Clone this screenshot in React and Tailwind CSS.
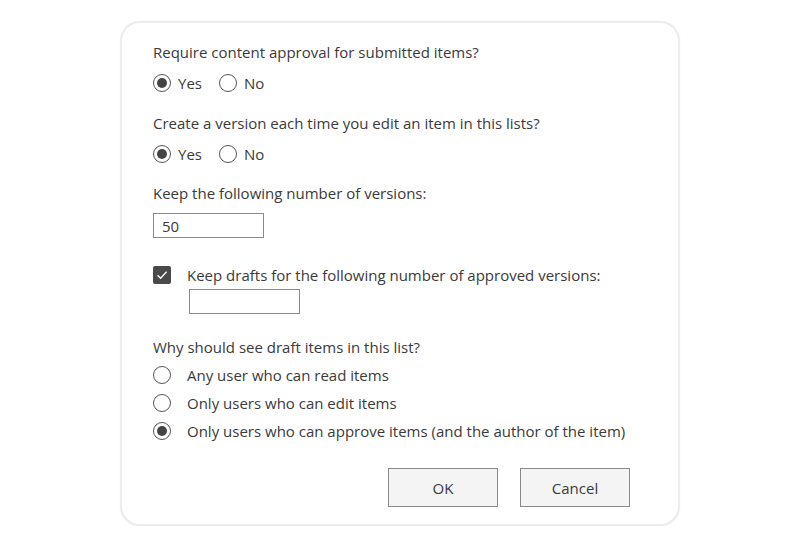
import React, { useState } from 'react';

const Radio = ({ checked, onChange, label }) => (
    <label className="flex items-center h-5 cursor-pointer" onClick={onChange}>
        <span className="w-[18px] h-[18px] rounded-full border-[1.5px] border-[#555] flex items-center justify-center bg-white">
            {checked && <span className="w-[10px] h-[10px] rounded-full bg-[#444]" />}
        </span>
        <span className="ml-[7px]">{label}</span>
    </label>
);

const App = () => {
    const [approval, setApproval] = useState('yes');
    const [versioning, setVersioning] = useState('yes');
    const [versions, setVersions] = useState('50');
    const [keepDrafts, setKeepDrafts] = useState(true);
    const [drafts, setDrafts] = useState('');
    const [visibility, setVisibility] = useState('approve');

    const options = [
        { key: 'read', label: 'Any user who can read items' },
        { key: 'edit', label: 'Only users who can edit items' },
        { key: 'approve', label: 'Only users who can approve items (and the author of the item)' },
    ];

    return (
        <div className="min-h-screen flex items-center justify-center bg-white" style={{ fontFamily: '"Open Sans", "Noto Sans", sans-serif' }}>
            <div className="w-[560px] h-[505px] rounded-[20px] border-[2px] border-[#ececec] bg-white pl-[31px] pr-[48px] pt-[19px] pb-[17px] text-[15px] text-[#3a3a3a] leading-5 shadow-[0_0_2px_rgba(0,0,0,0.06)]">

                <p>Require content approval for submitted items?</p>
                <div className="flex gap-[17px] mt-[11px]">
                    <Radio label="Yes" checked={approval === 'yes'} onChange={() => setApproval('yes')} />
                    <Radio label="No" checked={approval === 'no'} onChange={() => setApproval('no')} />
                </div>

                <p className="mt-[20px]">Create a version each time you edit an item in this lists?</p>
                <div className="flex gap-[17px] mt-[11px]">
                    <Radio label="Yes" checked={versioning === 'yes'} onChange={() => setVersioning('yes')} />
                    <Radio label="No" checked={versioning === 'no'} onChange={() => setVersioning('no')} />
                </div>

                <p className="mt-[19px]">Keep the following number of versions:</p>
                <input
                    type="text"
                    value={versions}
                    onChange={(e) => setVersions(e.target.value)}
                    className="block mt-[10px] w-[111px] h-[25px] border border-[#8a8a8a] px-[8px] text-[15px] text-[#3a3a3a] outline-none"
                />

                {/* Drafts */}
                <label className="flex items-center h-5 mt-[27px] cursor-pointer" onClick={() => setKeepDrafts(!keepDrafts)}>
                    <span className={`w-[18px] h-[18px] rounded-[2px] flex items-center justify-center ${keepDrafts ? 'bg-[#4a4a4a]' : 'border border-[#555] bg-white'}`}>
                        {keepDrafts && (
                            <svg width="14" height="14" viewBox="0 0 14 14" fill="none">
                                <path d="M2.5 7.2 L5.6 10.3 L11.6 3.8" stroke="white" strokeWidth="1.3" />
                            </svg>
                        )}
                    </span>
                    <span className="ml-[16px]">Keep drafts for the following number of approved versions:</span>
                </label>
                <input
                    type="text"
                    value={drafts}
                    onChange={(e) => setDrafts(e.target.value)}
                    className="block mt-[4px] ml-[36px] w-[111px] h-[25px] border border-[#8a8a8a] px-[8px] text-[15px] text-[#3a3a3a] outline-none"
                />

                <p className="mt-[23px]">Why should see draft items in this list?</p>
                <div className="flex flex-col gap-[8px] mt-[8px]">
                    {options.map(o => (
                        <label key={o.key} className="flex items-center h-5 cursor-pointer" onClick={() => setVisibility(o.key)}>
                            <span className="w-[18px] h-[18px] rounded-full border-[1.5px] border-[#555] flex items-center justify-center bg-white">
                                {visibility === o.key && <span className="w-[10px] h-[10px] rounded-full bg-[#444]" />}
                            </span>
                            <span className="ml-[16px]">{o.label}</span>
                        </label>
                    ))}
                </div>

                <div className="flex justify-end gap-[22px] mt-[27px]">
                    <button className="w-[110px] h-[39px] border border-[#8a8a8a] bg-[#f4f4f4] text-[15px] text-[#3a3a3a]">OK</button>
                    <button className="w-[110px] h-[39px] border border-[#8a8a8a] bg-[#f4f4f4] text-[15px] text-[#3a3a3a]">Cancel</button>
                </div>
            </div>
        </div>
    );
};

export default App;
